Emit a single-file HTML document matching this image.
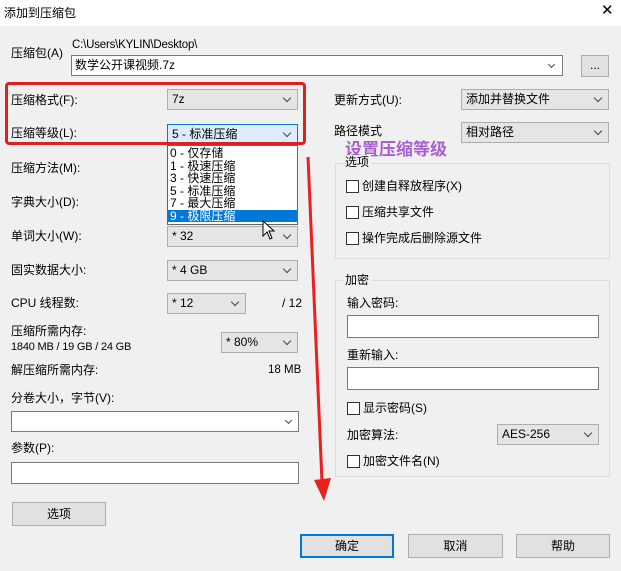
<!DOCTYPE html>
<html><head><meta charset="utf-8"><style>
*{margin:0;padding:0;box-sizing:border-box}
body{width:621px;height:571px;background:#f0f0f0;position:relative;overflow:hidden;font-family:"Liberation Sans","Noto Sans CJK SC",sans-serif;font-size:12px;color:#000}
.t{position:absolute;white-space:nowrap;line-height:14px}
.sel{position:absolute;height:21px;background:#e5e5e5;border:1px solid #adadad;padding-left:4px;line-height:19px}
.sel:after{content:"";position:absolute;right:7px;top:5px;width:5px;height:5px;border-right:1px solid #444;border-bottom:1px solid #444;transform:rotate(45deg)}
.inp{position:absolute;background:#fff;border:1px solid #7a7a7a}
.btn{position:absolute;height:24px;background:#e1e1e1;border:1px solid #adadad;text-align:center;line-height:22px}
.cb{position:absolute;width:13px;height:13px;border:1px solid #333;background:#fff}
.grp{position:absolute;border:1px solid #dcdcdc}
</style></head><body>
<div style="position:absolute;left:0;top:0;width:621px;height:26px;background:#fff"></div>
<div class="t" style="left:4px;top:6px">添加到压缩包</div>
<div class="t" style="left:601px;top:4px;font-size:15px">✕</div>

<div class="t" style="left:11px;top:46px">压缩包(A)</div>
<div class="t" style="left:72px;top:38px;font-size:11.5px;letter-spacing:-0.2px">C:\Users\KYLIN\Desktop\</div>
<div class="inp" style="left:71px;top:55px;width:492px;height:21px;padding-left:3px;line-height:19px">数学公开课视频.7z</div>
<div style="position:absolute;left:549px;top:62px;width:5px;height:5px;border-right:1px solid #444;border-bottom:1px solid #444;transform:rotate(45deg)"></div>
<div class="btn" style="left:581px;top:55px;width:28px;height:22px;line-height:18px">...</div>

<div class="t" style="left:11px;top:93px">压缩格式(F):</div>
<div class="sel" style="left:167px;top:89px;width:131px">7z</div>
<div class="t" style="left:11px;top:126px">压缩等级(L):</div>
<div class="sel" style="left:167px;top:124px;width:131px;background:#dcecfc;border-color:#0078d7">5 - 标准压缩</div>
<div style="position:absolute;left:5px;top:82px;width:301px;height:63px;border:3px solid #e02020;border-radius:4px"></div>

<div class="t" style="left:11px;top:161px">压缩方法(M):</div>
<div class="t" style="left:11px;top:195px">字典大小(D):</div>
<div class="t" style="left:11px;top:229px">单词大小(W):</div>
<div class="sel" style="left:167px;top:226px;width:131px">* 32</div>
<div class="t" style="left:11px;top:263px">固实数据大小:</div>
<div class="sel" style="left:167px;top:260px;width:131px">* 4 GB</div>
<div class="t" style="left:11px;top:296px">CPU 线程数:</div>
<div class="sel" style="left:167px;top:293px;width:79px">* 12</div>
<div class="t" style="left:282px;top:296px">/ 12</div>
<div class="t" style="left:11px;top:324px">压缩所需内存:</div>
<div class="t" style="left:11px;top:340px;font-size:11px;letter-spacing:-0.2px">1840 MB / 19 GB / 24 GB</div>
<div class="sel" style="left:221px;top:332px;width:77px">* 80%</div>
<div class="t" style="left:11px;top:363px">解压缩所需内存:</div>
<div class="t" style="left:268px;top:363px;font-size:11.5px">18 MB</div>
<div class="t" style="left:11px;top:391px">分卷大小，字节(V):</div>
<div class="inp" style="left:11px;top:411px;width:288px;height:21px"></div>
<div style="position:absolute;left:286px;top:418px;width:5px;height:5px;border-right:1px solid #444;border-bottom:1px solid #444;transform:rotate(45deg)"></div>
<div class="t" style="left:11px;top:441px">参数(P):</div>
<div class="inp" style="left:11px;top:462px;width:288px;height:22px"></div>
<div class="btn" style="left:12px;top:502px;width:94px">选项</div>

<!-- dropdown -->
<div style="position:absolute;left:167px;top:145px;width:131px;height:80px;background:#fff;border:1px solid #646464;line-height:12.5px;font-size:12px;padding-top:1px">
<div style="padding-left:2px">0 - 仅存储</div>
<div style="padding-left:2px">1 - 极速压缩</div>
<div style="padding-left:2px">3 - 快速压缩</div>
<div style="padding-left:2px">5 - 标准压缩</div>
<div style="padding-left:2px">7 - 最大压缩</div>
<div style="padding-left:2px;background:#0078d7;color:#fff">9 - 极限压缩</div>
</div>
<svg style="position:absolute;left:262px;top:220px" width="16" height="22"><path d="M1 1 L1 16 L5 12 L8 19 L10 18 L7 11 L12 11 Z" fill="#fff" stroke="#000" stroke-width="1"/></svg>

<!-- right -->
<div class="t" style="left:334px;top:93px">更新方式(U):</div>
<div class="sel" style="left:461px;top:89px;width:148px">添加并替换文件</div>
<div class="t" style="left:334px;top:124px">路径模式</div>
<div class="sel" style="left:461px;top:122px;width:148px">相对路径</div>
<div class="t" style="left:345px;top:140px;font-size:17px;font-weight:bold;color:#a860d0;line-height:20px">设置压缩等级</div>

<div class="grp" style="left:335px;top:163px;width:275px;height:96px"></div>
<div class="t" style="left:343px;top:155px;background:#f0f0f0;padding:0 2px">选项</div>
<div class="cb" style="left:346px;top:180px"></div><div class="t" style="left:362px;top:179px">创建自释放程序(X)</div>
<div class="cb" style="left:346px;top:206px"></div><div class="t" style="left:362px;top:205px">压缩共享文件</div>
<div class="cb" style="left:346px;top:232px"></div><div class="t" style="left:362px;top:231px">操作完成后删除源文件</div>

<div class="grp" style="left:335px;top:280px;width:275px;height:197px"></div>
<div class="t" style="left:343px;top:273px;background:#f0f0f0;padding:0 2px">加密</div>
<div class="t" style="left:347px;top:296px">输入密码:</div>
<div class="inp" style="left:347px;top:315px;width:252px;height:23px"></div>
<div class="t" style="left:347px;top:348px">重新输入:</div>
<div class="inp" style="left:347px;top:367px;width:252px;height:23px"></div>
<div class="cb" style="left:347px;top:402px"></div><div class="t" style="left:363px;top:401px">显示密码(S)</div>
<div class="t" style="left:347px;top:428px">加密算法:</div>
<div class="sel" style="left:497px;top:424px;width:102px">AES-256</div>
<div class="cb" style="left:347px;top:455px"></div><div class="t" style="left:363px;top:454px">加密文件名(N)</div>

<div class="btn" style="left:300px;top:534px;width:94px;border:2px solid #0078d7;line-height:20px">确定</div>
<div class="btn" style="left:408px;top:534px;width:95px">取消</div>
<div class="btn" style="left:516px;top:534px;width:94px">帮助</div>

<svg style="position:absolute;left:0;top:0" width="621" height="571"><path d="M308 157 L322 482" stroke="#e82020" stroke-width="3" fill="none"/><path d="M314 480 L331 478 L324 501 Z" fill="#e82020"/></svg>
</body></html>
